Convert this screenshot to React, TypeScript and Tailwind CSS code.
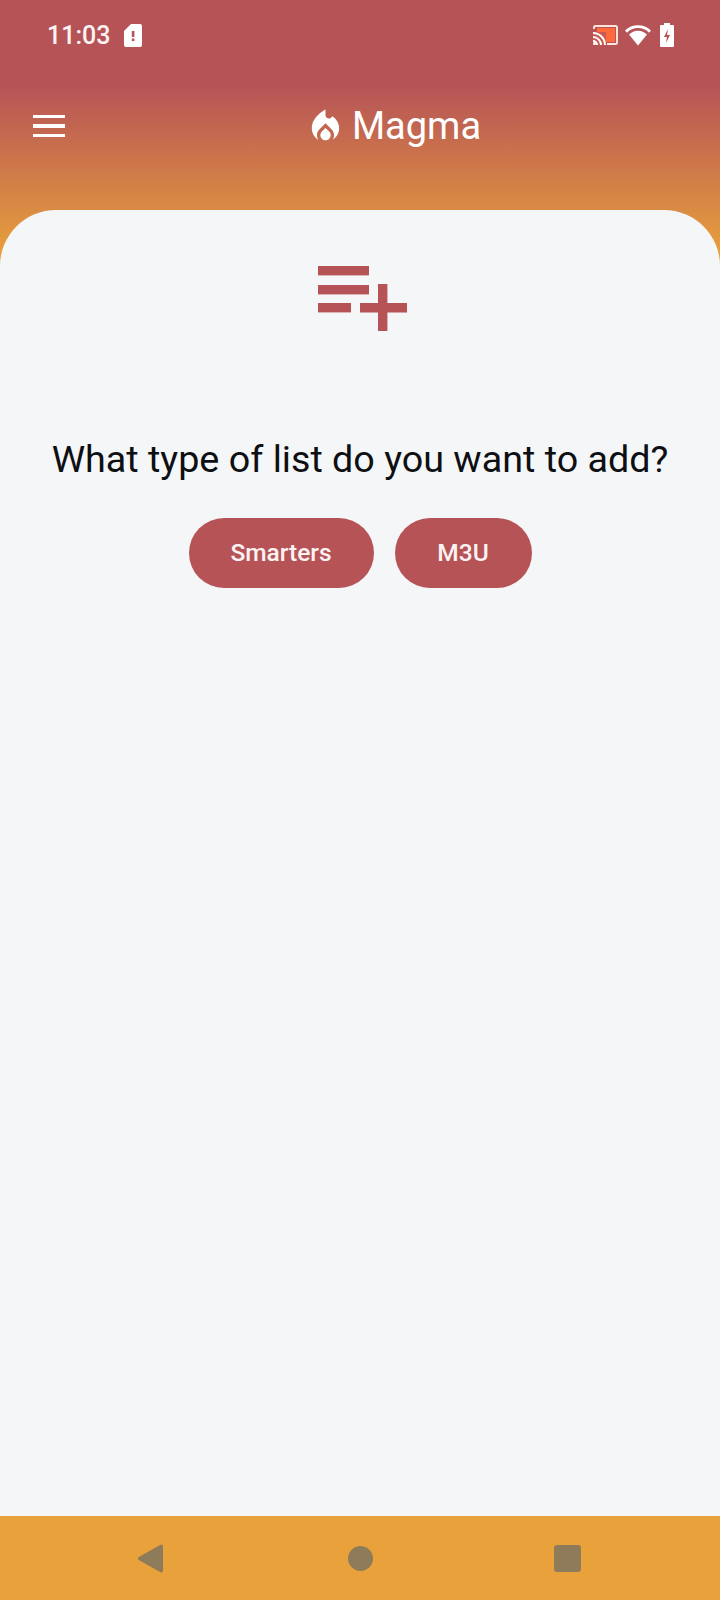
import React from "react";

const FlameIcon = () => (
  <svg viewBox="0 0 24 24" className="h-[41px] w-[41px] fill-white">
    <path d="M12 12.9l-2.13 2.09C9.31 15.55 9 16.28 9 17.06 9 18.68 10.35 20 12 20s3-1.32 3-2.94c0-.78-.31-1.52-.87-2.07L12 12.9z" />
    <path d="M16 6l-.44.55C14.38 8.02 12 7.19 12 5.3V2S4 6 4 13c0 2.92 1.56 5.47 3.89 6.86-.56-.79-.89-1.76-.89-2.8 0-1.32.52-2.56 1.47-3.5L12 10.1l3.53 3.47c.95.93 1.47 2.17 1.47 3.5 0 1.02-.31 1.96-.85 2.75 1.89-1.15 3.29-3.06 3.71-5.3.66-3.46-1.03-6.65-3.86-8.52z" />
  </svg>
);

const SimAlertIcon = () => (
  <svg viewBox="0 0 18 23" className="h-[23px] w-[18px]">
    <path d="M7 0h9a2 2 0 0 1 2 2v19a2 2 0 0 1-2 2H2a2 2 0 0 1-2-2V7z" fill="#fff" />
    <rect x="7.8" y="7" width="2.6" height="6" fill="#b65357" />
    <rect x="7.8" y="14.5" width="2.6" height="2.6" fill="#b65357" />
  </svg>
);

const CastIcon = () => (
  <svg viewBox="0 0 25 20" className="h-[20px] w-[25px]">
    <rect x="4" y="3" width="18" height="14" fill="#ff6a3c" />
    <path d="M1 4V2.5A1.5 1.5 0 0 1 2.5 1h20A1.5 1.5 0 0 1 24 2.5v15a1.5 1.5 0 0 1-1.5 1.5H14" fill="none" stroke="#fbe3dc" strokeWidth="2" />
    <rect x="0" y="7" width="13" height="13" fill="#c85a4e" />
    <path d="M0 8a12 12 0 0 1 12 12M0 12a8 8 0 0 1 8 8M0 16a4 4 0 0 1 4 4" fill="none" stroke="#fff" strokeWidth="2" />
    <circle cx="1.5" cy="18.5" r="1.5" fill="#fff" />
  </svg>
);

const WifiIcon = () => (
  <svg viewBox="0 0 26 22" className="h-[22px] w-[26px]">
    <path d="M0 6.5a18.5 18.5 0 0 1 26 0l-2 2.2a15.5 15.5 0 0 0-22 0z" fill="#fff" />
    <path d="M4 10.6a12.5 12.5 0 0 1 18 0L13 21.5z" fill="#fff" />
  </svg>
);

const BatteryIcon = () => (
  <svg viewBox="0 0 14 24" className="h-[24px] w-[14px]">
    <path d="M4 0h6v2h3a1 1 0 0 1 1 1v20a1 1 0 0 1-1 1H1a1 1 0 0 1-1-1V3a1 1 0 0 1 1-1h3z" fill="#fff" />
    <path d="M8 6l-4 8h3l-1 6 4-8H7z" fill="#b65357" />
  </svg>
);

const PlaylistAddIcon = () => (
  <svg viewBox="0 0 89 65" className="h-[65px] w-[89px] fill-[#b65357]">
    <rect x="0" y="0" width="51" height="9.4" />
    <rect x="0" y="19" width="51" height="9.4" />
    <rect x="0" y="37" width="33" height="9.4" />
    <path d="M60 18h9.4v19H89v9.4H69.4V65H60V46.4H42V37h18z" />
  </svg>
);

export default function App() {
  const font = "font-['Roboto',sans-serif]";

  return (
    <div className={`flex h-[1600px] w-[720px] flex-col bg-[#f5f6f8] ${font}`}>
      <div className="flex h-[1516px] flex-col bg-[linear-gradient(to_bottom,#b65357_85px,#e9a23b_260px)]">
        {/* status bar */}
        <div className="flex h-[70px] items-center justify-between pl-[47px] pr-[46px] text-white">
          <div className="flex items-center gap-[14px]">
            <span className="text-[25px] font-medium leading-none text-[#fdf3f2]">11:03</span>
            <SimAlertIcon />
          </div>
          <div className="flex items-center gap-[7px]">
            <CastIcon />
            <WifiIcon />
            <span className="ml-[2px]">
              <BatteryIcon />
            </span>
          </div>
        </div>

        {/* app bar */}
        <div className="relative mt-[21px] flex h-[70px] items-center justify-center pl-[66px] text-white">
          <button className="absolute left-[33px] flex w-[32px] flex-col gap-[6px]">
            <span className="h-[3.5px] bg-white" />
            <span className="h-[3.5px] bg-white" />
            <span className="h-[3.5px] bg-white" />
          </button>
          <div className="flex items-center gap-[6px]">
            <FlameIcon />
            <span className="text-[38px] leading-none">Magma</span>
          </div>
        </div>

        {/* content card */}
        <div className="mt-[49px] flex flex-1 flex-col items-center rounded-t-[56px] bg-[#f5f6f8] pt-[56px]">
          <div className="pl-[5px]">
            <PlaylistAddIcon />
          </div>
          <h1 className="mt-[104px] text-[37.7px] font-normal leading-[48px] text-[#0d0f12]">
            What type of list do you want to add?
          </h1>
          <div className="mt-[35px] flex gap-[21px]">
            <button className="h-[70px] w-[185px] rounded-[35px] bg-[#b65357] text-[24.5px] font-medium text-[#fdf3f2]">
              Smarters
            </button>
            <button className="h-[70px] w-[137px] rounded-[35px] bg-[#b65357] text-[24.5px] font-medium text-[#fdf3f2]">
              M3U
            </button>
          </div>
        </div>
      </div>

      {/* navigation bar */}
      <div className="flex h-[84px] items-center justify-between bg-[#e9a23b] pl-[138px] pr-[139px]">
        <svg viewBox="0 0 25 29" className="h-[29px] w-[25px] fill-[#8e7b59]">
          <path d="M23 0.5a2 2 0 0 1 2 1.5v25a2 2 0 0 1-2 1.5L0.8 16a2 2 0 0 1 0-3z" />
        </svg>
        <div className="ml-[4px] h-[25px] w-[25px] rounded-full bg-[#8e7b59]" />
        <div className="h-[27px] w-[27px] rounded-[3px] bg-[#8e7b59]" />
      </div>
    </div>
  );
}
